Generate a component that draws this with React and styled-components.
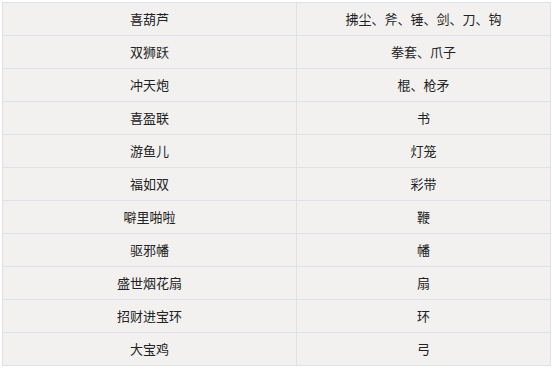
import React from 'react';
import styled, { createGlobalStyle } from 'styled-components';

const GlobalStyle = createGlobalStyle`
  html, body {
    margin: 0;
    padding: 0;
    background: #ffffff;
  }
  body {
    font-family: "Noto Sans CJK SC", "Noto Sans", sans-serif;
  }
`;

const Wrapper = styled.div`
  padding: 2px;
  width: 548px;
`;

const Table = styled.table`
  width: 546px;
  border-collapse: collapse;
  table-layout: fixed;
  background: #f2f1f0;
  border: 1px solid #dce2e8;
`;

const Row = styled.tr`
  height: 33px;
`;

const Cell = styled.td`
  border: 1px solid #dce2e8;
  padding: 0;
  text-align: center;
  vertical-align: middle;
  font-size: 13px;
  line-height: 16px;
  color: #222222;
  width: ${p => p.$w}px;
`;

const rows = [
  ['喜葫芦', '拂尘、斧、锤、剑、刀、钩'],
  ['双狮跃', '拳套、爪子'],
  ['冲天炮', '棍、枪矛'],
  ['喜盈联', '书'],
  ['游鱼儿', '灯笼'],
  ['福如双', '彩带'],
  ['噼里啪啦', '鞭'],
  ['驱邪幡', '幡'],
  ['盛世烟花扇', '扇'],
  ['招财进宝环', '环'],
  ['大宝鸡', '弓'],
];

export default function App() {
  return (
    <>
      <GlobalStyle />
      <Wrapper>
        <Table>
          <tbody>
            {rows.map(([name, weapon], i) => (
              <Row key={i}>
                <Cell $w={293}>{name}</Cell>
                <Cell $w={253}>{weapon}</Cell>
              </Row>
            ))}
          </tbody>
        </Table>
      </Wrapper>
    </>
  );
}
